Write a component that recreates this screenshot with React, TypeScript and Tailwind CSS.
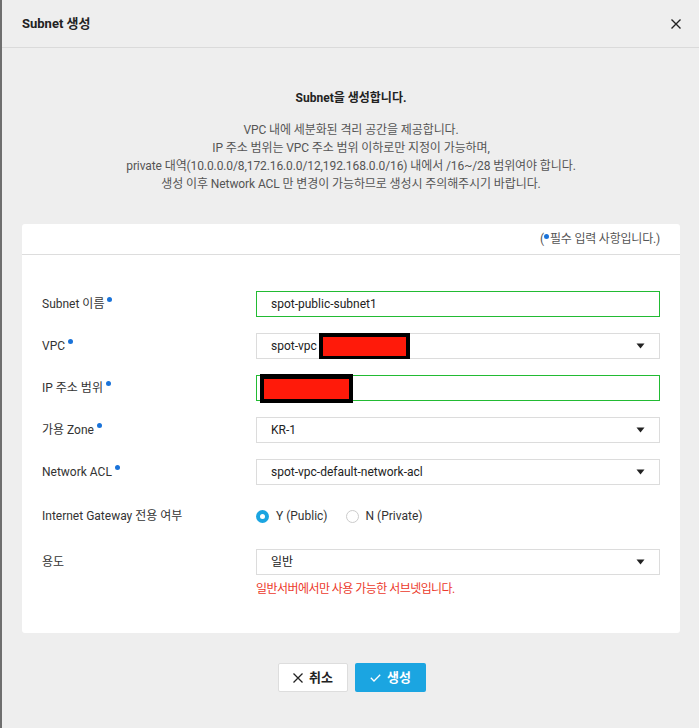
import React from "react";

const font = { fontFamily: 'Roboto, "Noto Sans CJK KR", sans-serif' };

function Dot() {
  return <span className="ml-[3px] inline-block h-[5px] w-[5px] -translate-y-[5px] rounded-full bg-[#1a73d9]" />;
}

function Caret() {
  return (
    <svg width="9" height="6" viewBox="0 0 9 6" className="shrink-0">
      <path d="M0.5 0.5 L8.5 0.5 L4.5 5.5 Z" fill="#222" />
    </svg>
  );
}

function Row({ label, req, children, className = "" }: { label: string; req?: boolean; children: React.ReactNode; className?: string }) {
  return (
    <div className={"flex items-start " + className}>
      <div className="flex h-[26px] w-[214px] shrink-0 items-center text-[12px] text-[#333]">
        {label}
        {req && <Dot />}
      </div>
      <div className="w-[404px]">{children}</div>
    </div>
  );
}

function Select({ value }: { value: React.ReactNode }) {
  return (
    <div className="flex h-[26px] items-center justify-between border border-[#dcdcdc] bg-white pl-[14px] pr-[14px] text-[12px] text-[#222]">
      <div className="flex items-center">{value}</div>
      <Caret />
    </div>
  );
}

export default function App() {
  return (
    <div className="flex min-h-[728px] w-[699px] bg-[#eeeeee]" style={font}>
      <div className="w-[2px] shrink-0 bg-[#6e6e6e]" />
      <div className="flex flex-1 flex-col">
        <div className="flex h-[48px] items-center justify-between border-b border-[#dadada] pl-[20px] pr-[19px]">
          <div className="text-[13px] font-bold text-[#222]">Subnet 생성</div>
          <svg width="10" height="10" viewBox="0 0 10 10">
            <path d="M0.5 0.5 L9.5 9.5 M9.5 0.5 L0.5 9.5" stroke="#222" strokeWidth="1.4" />
          </svg>
        </div>
        <div className="pt-[41px] text-center">
          <div className="text-[12px] font-bold leading-[18px] text-[#222]">Subnet을 생성합니다.</div>
          <div className="mt-[14px] text-[12px] leading-[18px] tracking-[-0.1px] text-[#555]">
            <div>VPC 내에 세분화된 격리 공간을 제공합니다.</div>
            <div>IP 주소 범위는 VPC 주소 범위 이하로만 지정이 가능하며,</div>
            <div>private 대역(10.0.0.0/8,172.16.0.0/12,192.168.0.0/16) 내에서 /16~/28 범위여야 합니다.</div>
            <div>생성 이후 Network ACL 만 변경이 가능하므로 생성시 주의해주시기 바랍니다.</div>
          </div>
        </div>
        <div className="mx-[20px] mt-[31px] rounded-[3px] bg-white">
          <div className="flex h-[31px] items-center justify-end border-b border-[#dddddd] pr-[20px] text-[12px] tracking-[-0.2px] text-[#555]">
            (<span className="mr-[1px] inline-block h-[5px] w-[5px] -translate-y-[3px] rounded-full bg-[#1a73d9]" />필수 입력 사항입니다.)
          </div>
          <div className="px-[20px] pt-[36px] pb-[36px]">
            <Row label="Subnet 이름" req>
              <div className="flex h-[26px] items-center border border-[#22bb33] pl-[14px] text-[12px] text-[#222]">spot-public-subnet1</div>
            </Row>
            <Row label="VPC" req className="mt-[16px]">
              <Select
                value={
                  <>
                    <span>spot-vpc</span>
                    <span className="ml-[2px] inline-flex h-[26px] w-[91px] items-center bg-black px-[4px]">
                      <span className="h-[19px] w-full bg-[#ff1a0a]" />
                    </span>
                  </>
                }
              />
            </Row>
            <Row label="IP 주소 범위" req className="mt-[16px]">
              <div className="relative flex h-[26px] items-center border border-[#22bb33] pl-[14px]">
                <span className="absolute -top-[2px] left-[3px] flex h-[29px] w-[93px] items-center bg-black px-[4px]">
                  <span className="h-[20px] w-full bg-[#ff1a0a]" />
                </span>
              </div>
            </Row>
            <Row label="가용 Zone" req className="mt-[16px]">
              <Select value="KR-1" />
            </Row>
            <Row label="Network ACL" req className="mt-[16px]">
              <Select value="spot-vpc-default-network-acl" />
            </Row>
            <Row label="Internet Gateway 전용 여부" className="mt-[18px]">
              <div className="flex h-[26px] items-center text-[12px] text-[#333]">
                <span className="flex h-[13px] w-[13px] items-center justify-center rounded-full bg-[#1ba5e1]">
                  <span className="h-[5px] w-[5px] rounded-full bg-white" />
                </span>
                <span className="ml-[7px]">Y (Public)</span>
                <span className="ml-[18px] h-[13px] w-[13px] rounded-full border border-[#cccccc] bg-white" />
                <span className="ml-[7px]">N (Private)</span>
              </div>
            </Row>
            <Row label="용도" className="mt-[20px]">
              <Select value="일반" />
              <div className="mt-[6px] text-[12px] leading-[16px] tracking-[-0.55px] text-[#ec3a2c]">일반서버에서만 사용 가능한 서브넷입니다.</div>
            </Row>
          </div>
        </div>
        <div className="mt-[30px] flex justify-center gap-[7px] pl-[2px]">
          <button className="flex h-[29px] w-[70px] items-center justify-center gap-[6px] rounded-[2px] border border-[#dddddd] bg-white text-[13px] font-bold text-[#222]">
            <svg width="10" height="10" viewBox="0 0 10 10">
              <path d="M0.5 0.5 L9.5 9.5 M9.5 0.5 L0.5 9.5" stroke="#222" strokeWidth="1.3" />
            </svg>
            취소
          </button>
          <button className="flex h-[29px] w-[71px] items-center justify-center gap-[6px] rounded-[2px] bg-[#1ba5e1] text-[13px] font-bold text-white">
            <svg width="11" height="8" viewBox="0 0 11 8">
              <path d="M0.8 3.8 L4 7 L10.2 0.8" stroke="#fff" strokeWidth="1.3" fill="none" />
            </svg>
            생성
          </button>
        </div>
      </div>
    </div>
  );
}
